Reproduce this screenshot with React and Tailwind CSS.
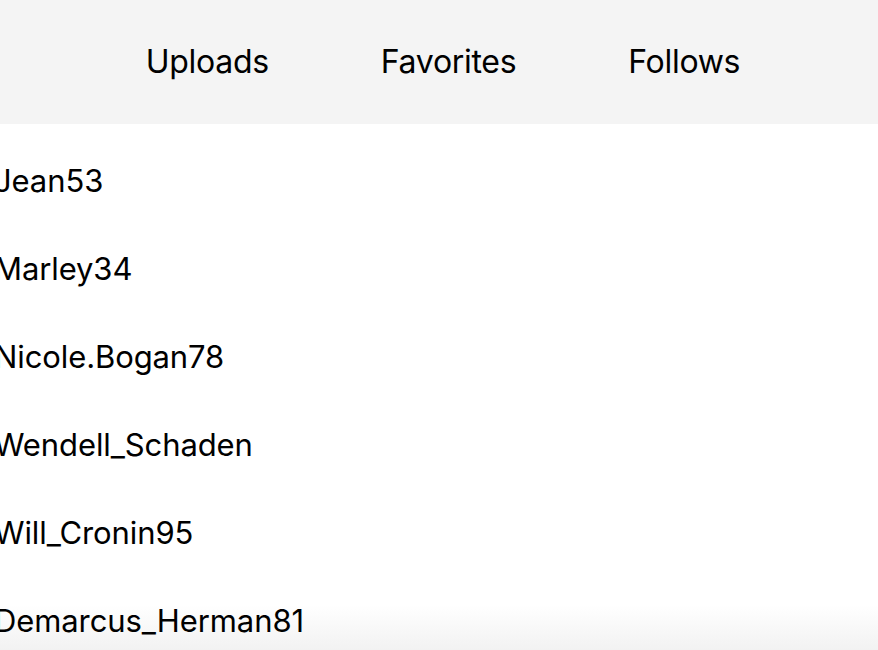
import React from 'react';

const tabs = ['Uploads', 'Favorites', 'Follows'];

const users = [
  'Jean53',
  'Marley34',
  'Nicole.Bogan78',
  'Wendell_Schaden',
  'Will_Cronin95',
  'Demarcus_Herman81',
  'Kaley.Ward',
  'Orval_Mante12',
];

export default function App() {
  return (
    <div className="relative h-[650px] overflow-hidden bg-white text-black font-['Inter',sans-serif]">
      {/* Sombra inferior */}
      <div className="pointer-events-none absolute bottom-0 left-0 right-0 h-[45px] bg-gradient-to-b from-white/0 to-[#f2f2f2]" />

      {/* Tabs */}
      <div className="relative flex h-[124px] items-center justify-center gap-[112px] bg-[#f4f4f4] pl-[8px]">
        {tabs.map((tab) => (
          <button key={tab} className="text-[32px] leading-none tracking-[-0.3px]">
            {tab}
          </button>
        ))}
      </div>

      {/* Lista */}
      <ul className="relative -ml-[6px] pt-[33px]">
        {users.map((name) => (
          <li key={name} className="flex h-[88px] items-start text-[31px] leading-[48px] tracking-[-0.1px]">
            {name}
          </li>
        ))}
      </ul>
    </div>
  );
}
